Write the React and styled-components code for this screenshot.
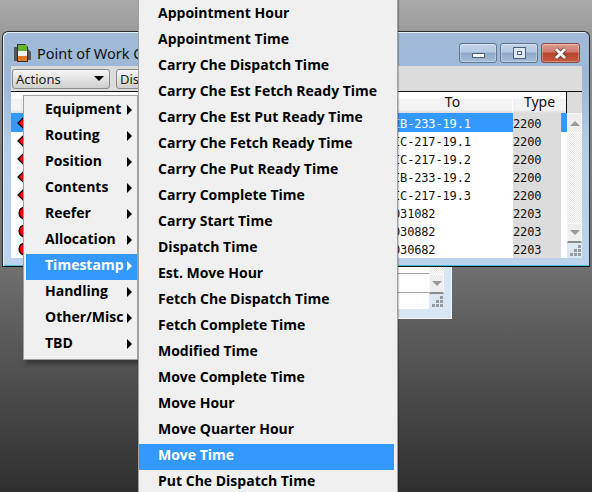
import React from 'react';
import styled, { createGlobalStyle } from 'styled-components';

const Global = createGlobalStyle`
  html, body { margin: 0; padding: 0; background: #333; }
  * { box-sizing: border-box; }
`

const Desktop = styled.div`
  position: relative;
  width: 592px;
  height: 492px;
  overflow: hidden;
  background: linear-gradient(#a9a9a9 0, #8f8f8f 60px, #6f6f6f 270px, #5c5c5c 330px, #2f2f2f 492px);
  font-family: 'Liberation Sans', Arial, sans-serif;
`

/* window behind the main one, only its lower right corner shows */
const BackWindow = styled.div`
  position: absolute;
  left: 40px;
  top: 200px;
  width: 412px;
  height: 119px;
  padding: 0 7px 9px 0;
  background: #d8e5f3;
  border-right: 1px solid #f4f7fb;
  border-bottom: 1px solid #f4f7fb;
  display: flex;
`

const BackList = styled.div`
  flex: 1;
  background: #fff;
  display: flex;
  flex-direction: column;
  padding-top: 73px;
`

const BackLine = styled.div`
  height: 20px;
  border-top: 1px solid #a8a8a8;
  border-bottom: 1px solid #a8a8a8;
`

const Window = styled.div`
  position: absolute;
  left: 2px;
  top: 31px;
  width: 588px;
  height: 236px;
  display: flex;
  flex-direction: column;
  padding: 0 7px 8px 8px;
  border: 1px solid #2b2b2b;
  border-bottom-color: #111;
  border-radius: 6px 6px 0 0;
  background: linear-gradient(#a0bad8 0, #9db8d6 50px, #b6cfe8 120px, #bbd3ec 235px);
  box-shadow: inset 1px 1px 0 #e8f0f8, inset 0 -1px 0 #3fc0d8;
`

const TitleBar = styled.div`
  height: 34px;
  display: flex;
  align-items: center;
  flex-shrink: 0;
  padding-top: 8px;
`

const AppIcon = styled.svg`
  width: 20px;
  height: 20px;
  margin: 0 4px 0 2px;
  flex-shrink: 0;
`

const TitleText = styled.div`
  font-family: 'Noto Sans', sans-serif;
  font-size: 14.5px;
  color: #111;
  white-space: nowrap;
`

const WinButtons = styled.div`
  margin-left: auto;
  display: flex;
  gap: 3px;
  padding-right: 2px;
`

const WinButton = styled.div`
  width: ${p => (p.$close ? 39 : 38)}px;
  height: 20px;
  border: 1px solid ${p => (p.$close ? '#8a4a44' : '#5f7590')};
  border-radius: 3px;
  display: flex;
  align-items: center;
  justify-content: center;
  background: ${p => (p.$close
    ? 'linear-gradient(#dd9d90 0, #d0766a 45%, #b8432c 50%, #c4593f 100%)'
    : 'linear-gradient(#c4d5ea 0, #b3c8e0 45%, #8ea9c8 50%, #a6bdd8 100%)')};
  box-shadow: inset 0 0 0 1px rgba(255,255,255,0.3);
`

const MinGlyph = styled.div`
  width: 13px;
  height: 5px;
  margin-top: 5px;
  background: #fff;
  border: 1px solid #4c5f78;
`

const MaxGlyph = styled.div`
  width: 11px;
  height: 10px;
  background: #fff;
  border: 3px solid #dfe7f1;
  outline: 1px solid #4c5f78;
  box-shadow: inset 0 0 0 1px #4c5f78;
`

const Toolbar = styled.div`
  height: 25px;
  flex-shrink: 0;
  background: #dcdcdc;
  display: flex;
  align-items: center;
  gap: 6px;
  padding: 0 0 0 1px;
`

const ToolButton = styled.div`
  width: ${p => p.$width}px;
  height: 20px;
  display: flex;
  align-items: center;
  justify-content: space-between;
  padding: 0 5px 0 3px;
  border: 1px solid #8b8b8b;
  border-radius: 3px;
  background: linear-gradient(#f6f6f6, #e2e2e2 50%, #cfcfcf);
  font-family: 'Noto Sans', sans-serif;
  font-size: 13px;
  color: #222;
`

const DownTriangle = styled.div`
  width: 0;
  height: 0;
  border-left: 5px solid transparent;
  border-right: 5px solid transparent;
  border-top: 5px solid #000;
`

const Table = styled.div`
  flex: 1;
  display: flex;
  flex-direction: column;
  min-height: 0;
`

const HeaderRow = styled.div`
  height: 22px;
  flex-shrink: 0;
  display: flex;
  background: #dcdcdc;
`

const HeaderCells = styled.div`
  width: 556px;
  display: flex;
  border-top: 1px solid #111;
  border-right: 1px solid #111;
  background: linear-gradient(#fff 0, #fff 30%, #f3f3f3 35%, #f3f3f3 85%, #dcdcdc 100%);
`

const HeaderCell = styled.div`
  width: ${p => p.$width}px;
  flex: ${p => (p.$width ? 'none' : 1)};
  text-align: center;
  font-family: 'Noto Sans', sans-serif;
  font-size: 14px;
  line-height: 20px;
  color: #111;
  border-right: ${p => (p.$divider ? '1px solid #fff' : 0)};
`

const HeaderEnd = styled.div`
  flex: 1;
  border-top: 1px solid #111;
`

const Body = styled.div`
  flex: 1;
  display: flex;
  min-height: 0;
`

const Rows = styled.div`
  width: 556px;
  display: flex;
  flex-direction: column;
  background: #fff;
`

const Row = styled.div`
  height: ${p => (p.$selected ? 19 : 18)}px;
  display: flex;
  align-items: center;
  background: ${p => (p.$selected ? '#3399ff' : '#fff')};
  color: ${p => (p.$selected ? '#fff' : '#111')};
  font-family: 'DejaVu Sans Mono', monospace;
  font-size: 12px;
  letter-spacing: -0.15px;
`

const Marker = styled.svg`
  width: 14px;
  height: 14px;
  margin-left: ${p => (p.$round ? 7 : 6)}px;
  flex-shrink: 0;
`

const Spacer = styled.div`
  flex: 1;
`

const ToCell = styled.div`
  width: 120px;
  white-space: nowrap;
  padding-top: 2px;
`

const TypeCell = styled.div`
  width: 48px;
  height: 100%;
  display: flex;
  align-items: center;
  padding-top: 2px;
  background: #dcdcdc;
  color: #111;
`

const RowEnd = styled.div`
  width: 6px;
`

const ScrollColumn = styled.div`
  width: ${p => p.$width}px;
  flex-shrink: 0;
  display: flex;
  flex-direction: column;
  background-color: #fff;
  background-image: repeating-conic-gradient(#e4e4e4 0 25%, #fff 0 50%);
  background-size: 2px 2px;
`

const ScrollButton = styled.div`
  height: 20px;
  flex-shrink: 0;
  display: flex;
  align-items: center;
  justify-content: center;
  background: #eeeeee;
  border: 1px solid #f8f8f8;
  border-bottom: ${p => (p.$down ? '2px solid #8c8c8c' : '1px solid #f8f8f8')};
`

const ScrollArrow = styled.div`
  width: 0;
  height: 0;
  border-left: 5px solid transparent;
  border-right: 5px solid transparent;
  border-top: ${p => (p.$up ? 0 : '5px solid #9a9a9a')};
  border-bottom: ${p => (p.$up ? '5px solid #9a9a9a' : 0)};
`

const ScrollFill = styled.div`
  flex: 1;
`

const Grip = styled.svg`
  width: 15px;
  height: 15px;
  display: block;
  background: #dce8f4;
`

const Menu = styled.div`
  position: absolute;
  left: ${p => p.$left}px;
  top: ${p => p.$top}px;
  width: ${p => p.$width}px;
  height: ${p => p.$height}px;
  padding: ${p => p.$padding};
  background: #f0f0f0;
  border: 1px solid #a0a0a0;
  border-top-width: ${p => (p.$flush ? 0 : 1)}px;
  border-bottom-width: ${p => (p.$flush ? 0 : 1)}px;
  box-shadow: ${p => (p.$flush ? '1px 0 1px rgba(0,0,0,0.2)' : '3px 4px 4px rgba(0,0,0,0.35)')};
`

const Item = styled.div`
  height: 26px;
  display: flex;
  align-items: center;
  position: relative;
  padding-left: ${p => p.$indent}px;
  padding-bottom: 5px;
  font-family: 'Open Sans', sans-serif;
  font-size: 14px;
  font-weight: 700;
  white-space: nowrap;
  color: ${p => (p.$active ? '#fff' : '#000')};
  background: ${p => (p.$active ? '#3399ff' : 'transparent')};
`

const SubArrow = styled.span`
  position: absolute;
  right: 5px;
  top: 7px;
  width: 0;
  height: 0;
  border-top: 5px solid transparent;
  border-bottom: 5px solid transparent;
  border-left: 5px solid ${p => (p.$active ? '#fff' : '#000')};
`

const rows = [
  { to: 'IB-233-19.1', type: '2200', selected: true },
  { to: 'IC-217-19.1', type: '2200' },
  { to: 'IC-217-19.2', type: '2200' },
  { to: 'IB-233-19.2', type: '2200' },
  { to: 'IC-217-19.3', type: '2200' },
  { to: '031082', type: '2203', round: true },
  { to: '030882', type: '2203', round: true },
  { to: '030682', type: '2203', round: true },
]

const categories = ['Equipment', 'Routing', 'Position', 'Contents', 'Reefer', 'Allocation', 'Timestamp', 'Handling', 'Other/Misc', 'TBD']

const timestamps = [
  'Appointment Hour', 'Appointment Time', 'Carry Che Dispatch Time', 'Carry Che Est Fetch Ready Time',
  'Carry Che Est Put Ready Time', 'Carry Che Fetch Ready Time', 'Carry Che Put Ready Time', 'Carry Complete Time',
  'Carry Start Time', 'Dispatch Time', 'Est. Move Hour', 'Fetch Che Dispatch Time', 'Fetch Complete Time',
  'Modified Time', 'Move Complete Time', 'Move Hour', 'Move Quarter Hour', 'Move Time', 'Put Che Dispatch Time',
]

function GripDots() {
  const dots = [[11, 2], [7, 6], [11, 6], [3, 10], [7, 10], [11, 10]]
  return (
    <Grip viewBox="0 0 15 15">
      {dots.map(([x, y]) => (
        <rect key={`${x}-${y}`} x={x} y={y} width="3" height="3" fill="#9a9a9a" />
      ))}
    </Grip>
  )
}

function RowMarker({ round }) {
  return (
    <Marker $round={round} viewBox="0 0 14 14">
      {round
        ? <circle cx="7" cy="7" r="6" fill="#f00" stroke="#000" strokeWidth="1.2" />
        : <path d="M1 7 L7 1 H13 V13 H7 Z" fill="#f00" stroke="#000" strokeWidth="1.2" />}
    </Marker>
  )
}

export default function App() {
  return (
    <Desktop>
      <Global />
      <BackWindow>
        <BackList>
          <BackLine />
        </BackList>
        <ScrollColumn $width={15}>
          <ScrollFill />
          <ScrollButton $down>
            <ScrollArrow />
          </ScrollButton>
          <GripDots />
        </ScrollColumn>
      </BackWindow>

      <Window>
        <TitleBar>
          <AppIcon viewBox="0 0 20 20">
            <path d="M1 4 H4 V18 H1 Z" fill="#555" />
            <path d="M15 6 L18 9 V17 H15 Z" fill="#555" />
            <path d="M4 1 H12 L15 4 V19 H4 Z" fill="#333" />
            <rect x="5" y="2" width="9" height="6" fill="#62b32e" />
            <rect x="5" y="8" width="9" height="5" fill="#f2f2f2" />
            <rect x="5" y="13" width="9" height="5" fill="#e8751a" />
          </AppIcon>
          <TitleText>Point of Work C</TitleText>
          <WinButtons>
            <WinButton><MinGlyph /></WinButton>
            <WinButton><MaxGlyph /></WinButton>
            <WinButton $close>
              <svg width="15" height="13" viewBox="0 0 15 13">
                <path d="M3 2 L12 11 M12 2 L3 11" stroke="#5a2a24" strokeWidth="4.5" />
                <path d="M3 2 L12 11 M12 2 L3 11" stroke="#fff" strokeWidth="3" />
              </svg>
            </WinButton>
          </WinButtons>
        </TitleBar>

        <Toolbar>
          <ToolButton $width={98}>
            Actions
            <DownTriangle />
          </ToolButton>
          <ToolButton $width={80}>Dis</ToolButton>
        </Toolbar>

        <Table>
          <HeaderRow>
            <HeaderCells>
              <HeaderCell />
              <HeaderCell $width={120} $divider>To</HeaderCell>
              <HeaderCell $width={53}>Type</HeaderCell>
            </HeaderCells>
            <HeaderEnd />
          </HeaderRow>
          <Body>
            <Rows>
              {rows.map(r => (
                <Row key={r.to} $selected={r.selected}>
                  <RowMarker round={r.round} />
                  <Spacer />
                  <ToCell>{r.to}</ToCell>
                  <TypeCell>{r.type}</TypeCell>
                  <RowEnd />
                </Row>
              ))}
            </Rows>
            <ScrollColumn $width={15}>
              <ScrollButton>
                <ScrollArrow $up />
              </ScrollButton>
              <ScrollFill />
              <ScrollButton $down>
                <ScrollArrow />
              </ScrollButton>
              <GripDots />
            </ScrollColumn>
          </Body>
        </Table>
      </Window>

      <Menu $left={23} $top={95} $width={115} $height={265} $padding="2px 0 0 2px">
        {categories.map(c => (
          <Item key={c} $indent={19} $active={c === 'Timestamp'}>
            {c}
            <SubArrow $active={c === 'Timestamp'} />
          </Item>
        ))}
      </Menu>

      <Menu $flush $left={138} $top={0} $width={260} $height={492} $padding="2px 3px 0 0">
        {timestamps.map(t => (
          <Item key={t} $indent={19} $active={t === 'Move Time'}>{t}</Item>
        ))}
      </Menu>
    </Desktop>
  )
}
